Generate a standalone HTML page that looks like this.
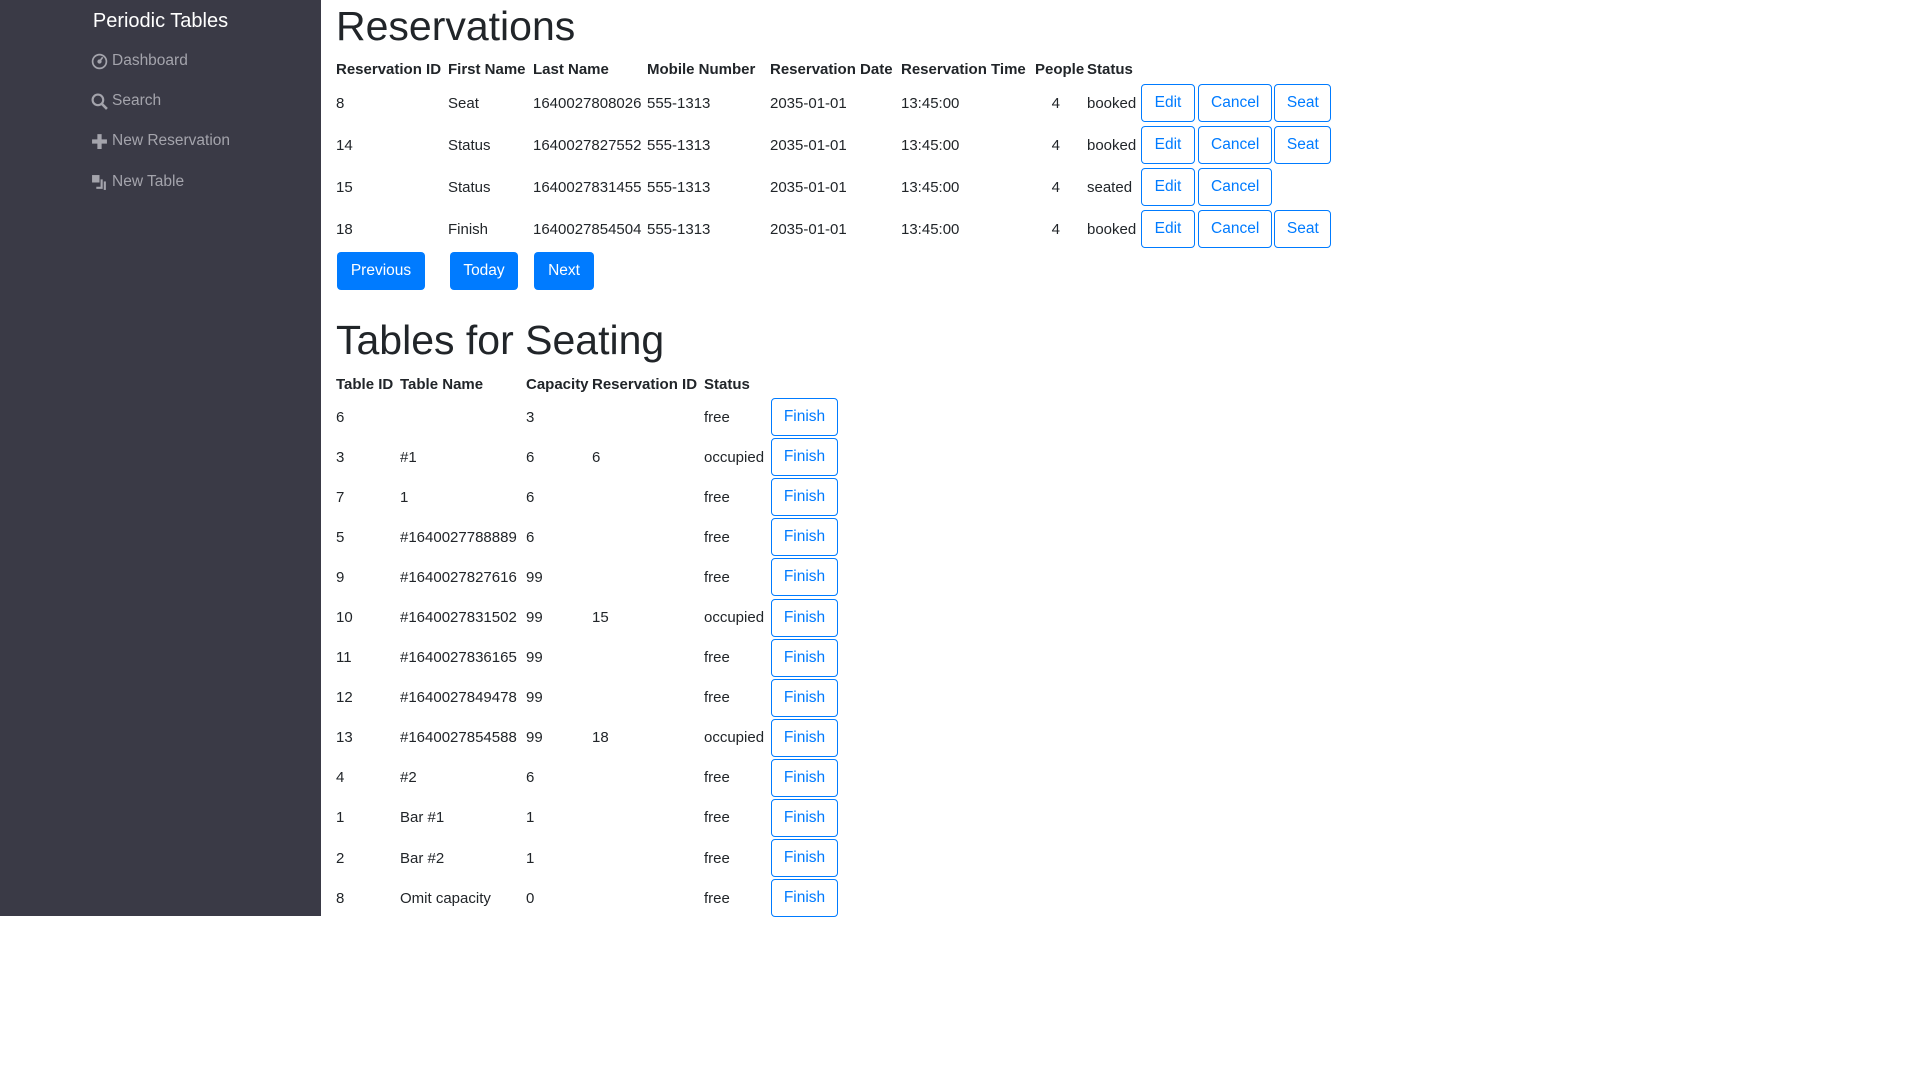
<!DOCTYPE html>
<html><head><meta charset="utf-8"><style>
*{box-sizing:border-box;margin:0;padding:0}
body{width:1920px;height:1080px;background:#fff;font-family:"Liberation Sans",sans-serif;font-size:15px;color:#212529;position:relative;overflow:hidden}
.side{position:absolute;left:0;top:0;width:321px;height:916px;background:#3a3a46}
.brand{position:absolute;left:0;width:321px;top:8px;text-align:center;color:#fff;font-size:20px;line-height:26px}
.nav{position:absolute;left:91px;color:#a4a4ac;font-size:15.5px;line-height:20px;display:flex;align-items:center;gap:4px}
.nav svg{width:17px;height:17px}
h1{position:absolute;left:336px;font-size:41px;font-weight:500;line-height:50px;color:#212529}
table{position:absolute;left:336px;border-collapse:collapse;table-layout:fixed}
th{text-align:left;font-weight:bold;height:26px;padding:0;white-space:nowrap;vertical-align:middle;overflow:hidden}
td{padding:0;white-space:nowrap;vertical-align:middle}
.r td{height:42px}
.t td{height:40.1px}
.b{display:inline-block;height:38px;line-height:36px;border:1px solid #007bff;color:#007bff;border-radius:4px;text-align:center;vertical-align:middle;font-size:15.5px}
.p{position:absolute;top:252px;height:38px;line-height:38px;background:#007bff;color:#fff;border-radius:4px;text-align:center;font-size:15.5px}
</style></head><body>
<div class="side">
<div class="brand">Periodic Tables</div>
<div class="nav" style="top:51px"><svg viewBox="0 0 16 16"><circle cx="8" cy="8" r="6.5" fill="none" stroke="#a4a4ac" stroke-width="1.6"/><circle cx="8" cy="8" r="2" fill="#a4a4ac"/><path d="M8 8l3-4" stroke="#a4a4ac" stroke-width="1.6"/></svg>Dashboard</div>
<div class="nav" style="top:91px"><svg viewBox="0 0 16 16"><circle cx="6.5" cy="6.5" r="5" fill="none" stroke="#a4a4ac" stroke-width="2"/><path d="M10 10l5 5" stroke="#a4a4ac" stroke-width="2.4"/></svg>Search</div>
<div class="nav" style="top:131px"><svg viewBox="0 0 16 16"><path d="M6 1h4v5h5v4h-5v5H6v-5H1V6h5z" fill="#a4a4ac"/></svg>New Reservation</div>
<div class="nav" style="top:172px"><svg viewBox="0 0 16 16"><rect x="1" y="1" width="7" height="7" fill="#a4a4ac"/><path d="M9 5h2v9H5v-2h4z" fill="#a4a4ac"/><rect x="12" y="7" width="2" height="8" fill="#a4a4ac"/></svg>New Table</div>
</div>
<h1 style="top:1px">Reservations</h1>
<table class="r" style="top:56px;width:995px">
<colgroup><col style="width:112px"><col style="width:85px"><col style="width:114px"><col style="width:123px"><col style="width:131px"><col style="width:134px"><col style="width:52px"><col style="width:54px"><col style="width:190px"></colgroup>
<tr><th>Reservation ID</th><th>First Name</th><th>Last Name</th><th>Mobile Number</th><th>Reservation Date</th><th>Reservation Time</th><th>People</th><th>Status</th><th></th></tr>
<tr><td>8</td><td>Seat</td><td>1640027808026</td><td>555-1313</td><td>2035-01-01</td><td>13:45:00</td><td>&nbsp;&nbsp;&nbsp;&nbsp;4</td><td>booked</td><td><span class="b" style="width:54px">Edit</span> <span class="b" style="width:74px;margin-left:-1px">Cancel</span> <span class="b" style="width:57px;margin-left:-2px">Seat</span></td></tr>
<tr><td>14</td><td>Status</td><td>1640027827552</td><td>555-1313</td><td>2035-01-01</td><td>13:45:00</td><td>&nbsp;&nbsp;&nbsp;&nbsp;4</td><td>booked</td><td><span class="b" style="width:54px">Edit</span> <span class="b" style="width:74px;margin-left:-1px">Cancel</span> <span class="b" style="width:57px;margin-left:-2px">Seat</span></td></tr>
<tr><td>15</td><td>Status</td><td>1640027831455</td><td>555-1313</td><td>2035-01-01</td><td>13:45:00</td><td>&nbsp;&nbsp;&nbsp;&nbsp;4</td><td>seated</td><td><span class="b" style="width:54px">Edit</span> <span class="b" style="width:74px;margin-left:-1px">Cancel</span></td></tr>
<tr><td>18</td><td>Finish</td><td>1640027854504</td><td>555-1313</td><td>2035-01-01</td><td>13:45:00</td><td>&nbsp;&nbsp;&nbsp;&nbsp;4</td><td>booked</td><td><span class="b" style="width:54px">Edit</span> <span class="b" style="width:74px;margin-left:-1px">Cancel</span> <span class="b" style="width:57px;margin-left:-2px">Seat</span></td></tr>
</table>
<div class="p" style="left:337px;width:88px">Previous</div>
<div class="p" style="left:450px;width:68px">Today</div>
<div class="p" style="left:534px;width:60px">Next</div>
<h1 style="top:315px">Tables for Seating</h1>
<table class="t" style="top:371px;width:515px">
<colgroup><col style="width:64px"><col style="width:126px"><col style="width:66px"><col style="width:112px"><col style="width:67px"><col style="width:80px"></colgroup>
<tr><th>Table ID</th><th>Table Name</th><th>Capacity</th><th>Reservation ID</th><th>Status</th><th></th></tr>
<tr><td>6</td><td></td><td>3</td><td></td><td>free</td><td><span class="b" style="width:67px">Finish</span></td></tr>
<tr><td>3</td><td>#1</td><td>6</td><td>6</td><td>occupied</td><td><span class="b" style="width:67px">Finish</span></td></tr>
<tr><td>7</td><td>1</td><td>6</td><td></td><td>free</td><td><span class="b" style="width:67px">Finish</span></td></tr>
<tr><td>5</td><td>#1640027788889</td><td>6</td><td></td><td>free</td><td><span class="b" style="width:67px">Finish</span></td></tr>
<tr><td>9</td><td>#1640027827616</td><td>99</td><td></td><td>free</td><td><span class="b" style="width:67px">Finish</span></td></tr>
<tr><td>10</td><td>#1640027831502</td><td>99</td><td>15</td><td>occupied</td><td><span class="b" style="width:67px">Finish</span></td></tr>
<tr><td>11</td><td>#1640027836165</td><td>99</td><td></td><td>free</td><td><span class="b" style="width:67px">Finish</span></td></tr>
<tr><td>12</td><td>#1640027849478</td><td>99</td><td></td><td>free</td><td><span class="b" style="width:67px">Finish</span></td></tr>
<tr><td>13</td><td>#1640027854588</td><td>99</td><td>18</td><td>occupied</td><td><span class="b" style="width:67px">Finish</span></td></tr>
<tr><td>4</td><td>#2</td><td>6</td><td></td><td>free</td><td><span class="b" style="width:67px">Finish</span></td></tr>
<tr><td>1</td><td>Bar #1</td><td>1</td><td></td><td>free</td><td><span class="b" style="width:67px">Finish</span></td></tr>
<tr><td>2</td><td>Bar #2</td><td>1</td><td></td><td>free</td><td><span class="b" style="width:67px">Finish</span></td></tr>
<tr><td>8</td><td>Omit capacity</td><td>0</td><td></td><td>free</td><td><span class="b" style="width:67px">Finish</span></td></tr>
</table>
</body></html>
